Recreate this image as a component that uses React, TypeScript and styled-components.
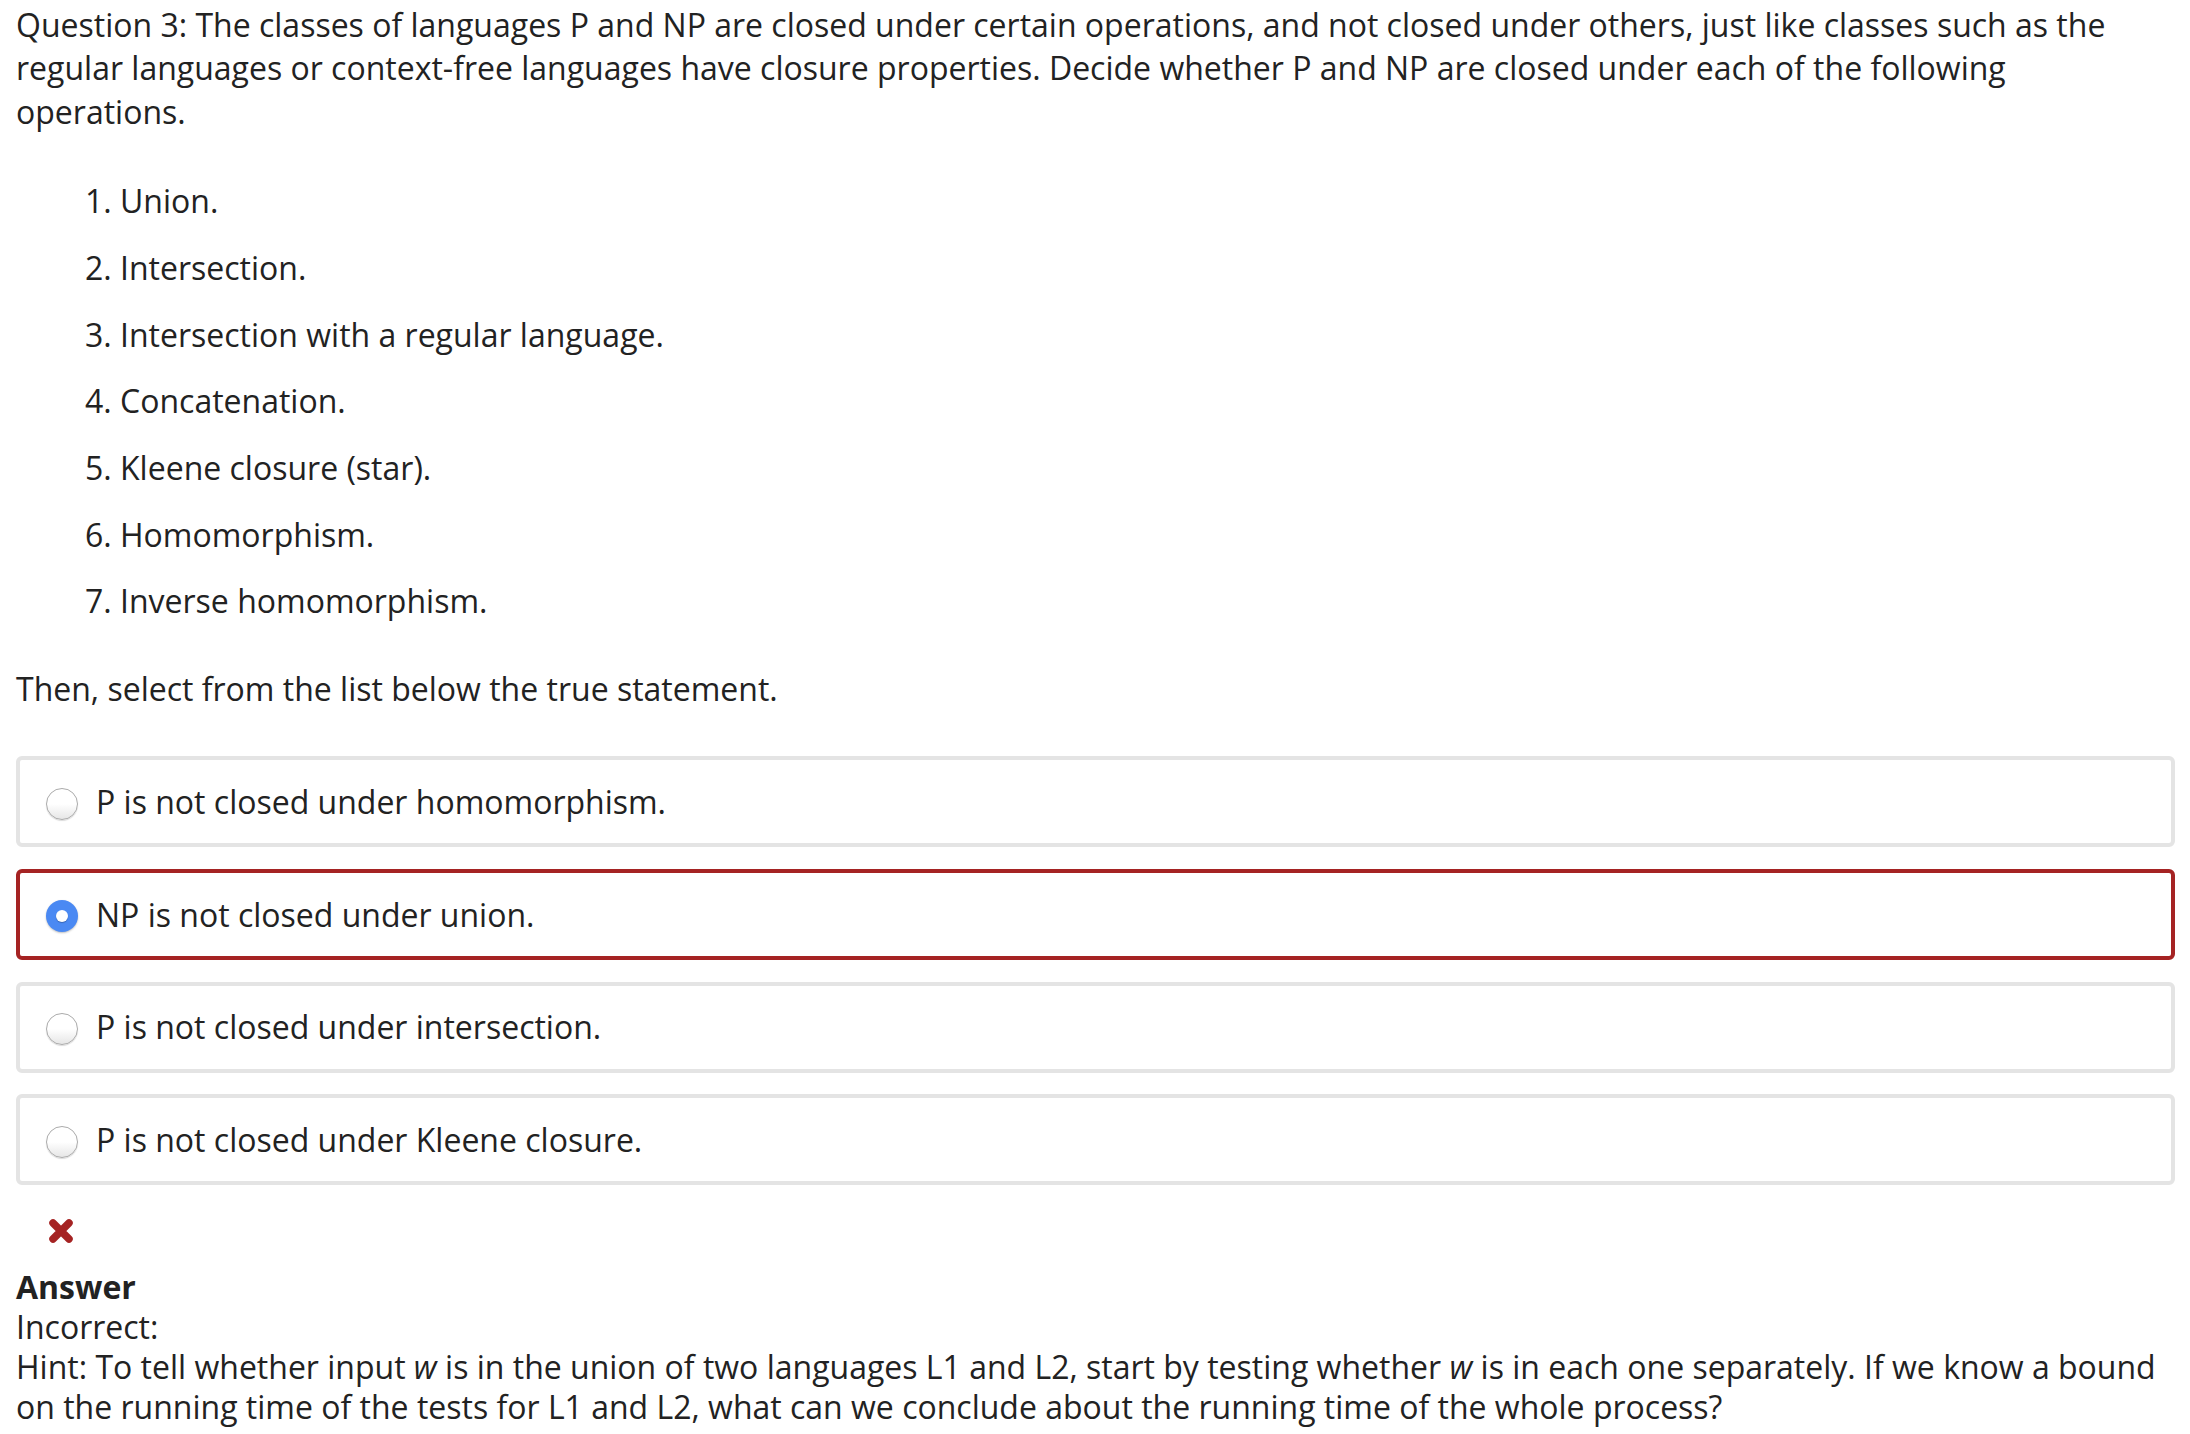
import React from 'react';
import styled, { createGlobalStyle } from 'styled-components';

const GlobalStyle = createGlobalStyle`
  body {
    margin: 0;
    background: #ffffff;
    font-family: 'Open Sans', 'Noto Sans', sans-serif;
    color: #222222;
  }
`;

type Choice = {
  label: string;
  checked?: boolean;
};

const operations = [
  'Union.',
  'Intersection.',
  'Intersection with a regular language.',
  'Concatenation.',
  'Kleene closure (star).',
  'Homomorphism.',
  'Inverse homomorphism.',
];

const choices: Choice[] = [
  { label: 'P is not closed under homomorphism.' },
  { label: 'NP is not closed under union.', checked: true },
  { label: 'P is not closed under intersection.' },
  { label: 'P is not closed under Kleene closure.' },
];

//small radio button, drawn with css
const Radio: React.FC<{ checked?: boolean }> = ({ checked }) => (
  <RadioCircle checked={checked}>{checked && <RadioDot />}</RadioCircle>
);

//red cross shown under the answered choices
const WrongMark = () => (
  <svg width="26" height="26" viewBox="0 0 26 26">
    <path d="M5 5 L21 21 M21 5 L5 21" stroke="#a52323" strokeWidth="7.5" strokeLinecap="round" />
  </svg>
);

const App = () => {
  return (
    <Page>
      <GlobalStyle />
      <Prompt>
        Question 3: The classes of languages P and NP are closed under certain operations, and not closed under
        others, just like classes such as the regular languages or context-free languages have closure properties.
        Decide whether P and NP are closed under each of the following operations.
      </Prompt>
      <OperationList>
        {operations.map((op) => (
          <Operation key={op}>{op}</Operation>
        ))}
      </OperationList>
      <Prompt>Then, select from the list below the true statement.</Prompt>
      <ChoiceList>
        {choices.map((c) => (
          <ChoiceBox key={c.label} wrong={c.checked}>
            <Radio checked={c.checked} />
            <ChoiceText>{c.label}</ChoiceText>
          </ChoiceBox>
        ))}
      </ChoiceList>
      <MarkRow>
        <WrongMark />
      </MarkRow>
      <Feedback>
        <FeedbackTitle>Answer</FeedbackTitle>
        <div>Incorrect:</div>
        <div>
          Hint: To tell whether input <em>w</em> is in the union of two languages L1 and L2, start by testing whether{' '}
          <em>w</em> is in each one separately. If we know a bound on the running time of the tests for L1 and L2, what
          can we conclude about the running time of the whole process?
        </div>
      </Feedback>
    </Page>
  );
};

const Page = styled.div`
  padding: 3px 15px 0 16px;
  font-size: 32px;
  line-height: 43.4px;
`;
const Prompt = styled.p`
  margin: 0;
`;
const OperationList = styled.ol`
  list-style: none;
  counter-reset: op;
  margin: 46px 0 44px;
  padding: 0 0 0 69px;
  display: flex;
  flex-direction: column;
  gap: 23.3px;
`;
const Operation = styled.li`
  counter-increment: op;
  &::before {
    content: counter(op) '. ';
  }
`;
const ChoiceList = styled.div`
  margin-top: 46px;
  display: flex;
  flex-direction: column;
  gap: 21.7px;
`;
const ChoiceBox = styled.div<{ wrong?: boolean }>`
  display: flex;
  align-items: center;
  gap: 18px;
  height: 83px;
  padding: 0 0 0 26px;
  border: 4px solid ${(props) => (props.wrong ? '#a52323' : '#e4e4e4')};
  border-radius: 6px;
`;
const RadioCircle = styled.span<{ checked?: boolean }>`
  flex: none;
  width: 32px;
  height: 32px;
  box-sizing: border-box;
  border-radius: 50%;
  display: flex;
  align-items: center;
  justify-content: center;
  margin-top: 4px;
  border: ${(props) => (props.checked ? 'none' : '1.5px solid #ababab')};
  background: ${(props) =>
    props.checked ? '#4a89f3' : 'linear-gradient(to bottom, #ffffff 0%, #ffffff 50%, #e6e6e6 100%)'};
  box-shadow: ${(props) => (props.checked ? '0 1px 2px rgba(0,0,0,0.25)' : '0 1px 1px rgba(0,0,0,0.15)')};
`;
const RadioDot = styled.span`
  width: 12px;
  height: 12px;
  border-radius: 50%;
  background: #ffffff;
  box-shadow: 0 1px 1px rgba(0, 0, 0, 0.25);
`;
const ChoiceText = styled.span`
  white-space: nowrap;
`;
const MarkRow = styled.div`
  display: flex;
  padding: 33px 0 0 32px;
  height: 26px;
`;
const Feedback = styled.div`
  margin-top: 23px;
  line-height: 40px;
`;
const FeedbackTitle = styled.div`
  font-weight: 700;
`;

export default App;
